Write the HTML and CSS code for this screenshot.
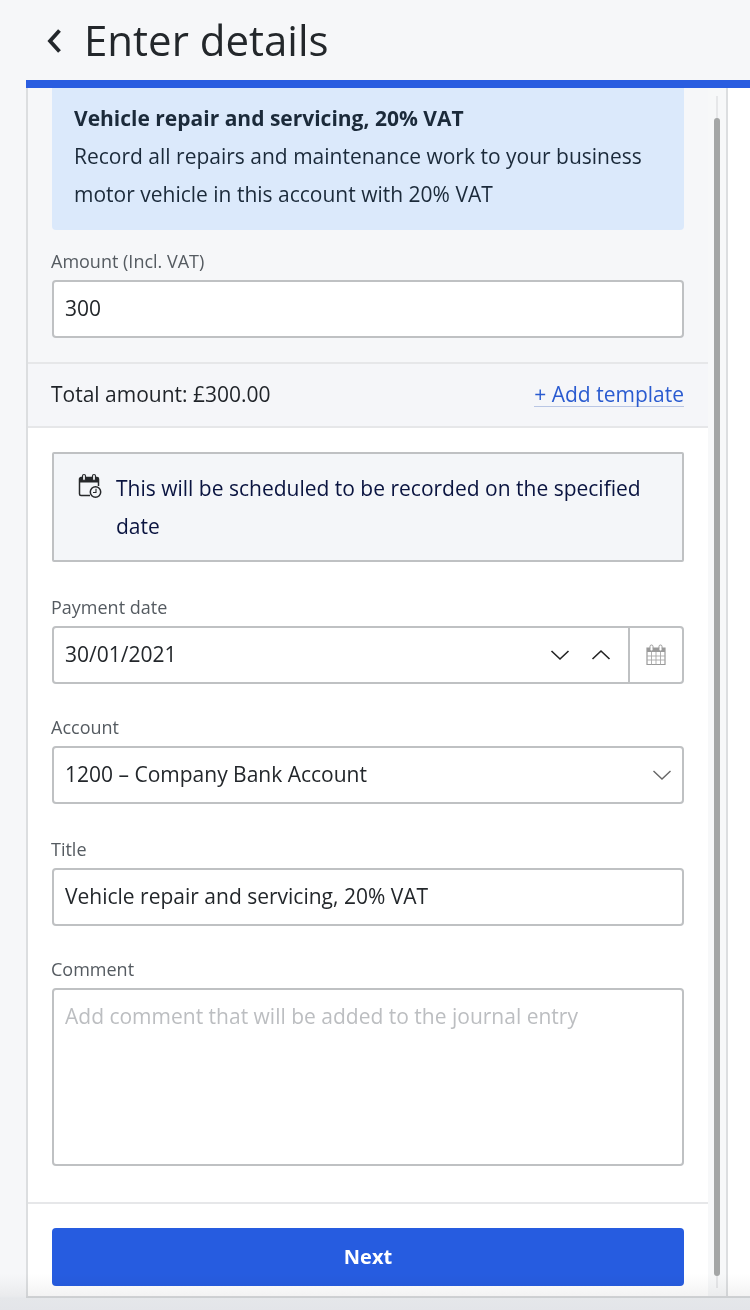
FILE: index.html
```html
<!DOCTYPE html>
<html lang="en">

<head>
  <meta charset="UTF-8">
  <meta name="viewport" content="width=device-width, initial-scale=1.0">
  <title>Enter details</title>
  <link rel="stylesheet" href="styles.css">
</head>

<body>
  <div class="header">
    <svg class="back-icon" width="16" height="26" viewBox="0 0 16 26">
      <path d="M13.5 2.5 L4 13 L13.5 23.5" fill="none" stroke="#23272b" stroke-width="3.8" />
    </svg>
    <h1>Enter details</h1>
  </div>

  <div class="panel">
    <div class="panel-main">

      <div class="top-section">
        <div class="info-box">
          <strong>Vehicle repair and servicing, 20% VAT</strong>
          <p>Record all repairs and maintenance work to your business motor vehicle in this account with 20% VAT</p>
        </div>
        <label class="field-label amount-label">Amount (Incl. VAT)</label>
        <div class="input">300</div>
      </div>

      <div class="total-row">
        <span>Total amount: £300.00</span>
        <a href="#" class="add-template">+ Add template</a>
      </div>

      <div class="form">
        <div class="notice">
          <svg class="notice-icon" width="24" height="26" viewBox="0 0 24 26">
            <path d="M3 4.5 H19 A1.5 1.5 0 0 1 20.5 6 V13 M12 22.5 H3 A1.5 1.5 0 0 1 1.5 21 V6 A1.5 1.5 0 0 1 3 4.5" fill="none" stroke="#26282b" stroke-width="1.5" />
            <path d="M1.5 5 H20.5 V9.5 H1.5 Z" fill="#26282b" />
            <rect x="4.5" y="1.5" width="3" height="6" rx="1.5" fill="#f4f6f9" stroke="#26282b" stroke-width="1.2" />
            <rect x="14.5" y="1.5" width="3" height="6" rx="1.5" fill="#f4f6f9" stroke="#26282b" stroke-width="1.2" />
            <circle cx="17.5" cy="19" r="5.2" fill="#f4f6f9" stroke="#26282b" stroke-width="1.5" />
            <path d="M18 15.8 V19.5 H15" fill="none" stroke="#26282b" stroke-width="1.1" />
          </svg>
          <p>This will be scheduled to be recorded on the specified date</p>
        </div>

        <label class="field-label field-label-wide">Payment date</label>
        <div class="input date-input">
          <span class="date-value">30/01/2021</span>
          <svg class="chevron" width="20" height="12" viewBox="0 0 20 12">
            <path d="M1.5 2 L10 10 L18.5 2" fill="none" stroke="#222" stroke-width="1.6" />
          </svg>
          <svg class="chevron" width="20" height="12" viewBox="0 0 20 12">
            <path d="M1.5 10 L10 2 L18.5 10" fill="none" stroke="#222" stroke-width="1.6" />
          </svg>
          <span class="date-button">
            <svg width="20" height="22" viewBox="0 0 20 22">
              <path d="M1 4 H19 V20.5 H1 Z" fill="#fff" stroke="#9a9a9a" stroke-width="1.2" />
              <path d="M1 4 H19 V8 H1 Z" fill="#9a9a9a" />
              <path d="M1 12 H19 M1 16 H19 M5.5 8 V20.5 M10 8 V20.5 M14.5 8 V20.5" fill="none" stroke="#a8a8a8" stroke-width="0.9" />
              <rect x="4" y="1" width="3" height="6" rx="1.5" fill="#fff" stroke="#9a9a9a" stroke-width="1" />
              <rect x="13" y="1" width="3" height="6" rx="1.5" fill="#fff" stroke="#9a9a9a" stroke-width="1" />
            </svg>
          </span>
        </div>

        <label class="field-label">Account</label>
        <div class="input select-input">
          <span class="select-value">1200 – Company Bank Account</span>
          <svg width="20" height="12" viewBox="0 0 20 12">
            <path d="M1.5 2 L10 10 L18.5 2" fill="none" stroke="#666" stroke-width="1.4" />
          </svg>
        </div>

        <label class="field-label field-label-wide">Title</label>
        <div class="input">Vehicle repair and servicing, 20% VAT</div>

        <label class="field-label">Comment</label>
        <div class="textarea">Add comment that will be added to the journal entry</div>
      </div>

      <div class="footer">
        <button class="next-button">Next</button>
      </div>
    </div>

    <div class="scroll-column">
      <div class="scroll-track">
        <div class="scroll-thumb"></div>
      </div>
    </div>
  </div>

  <div class="bottom-fade"></div>
</body>

</html>
```

FILE: styles.css
```css
* {
  margin: 0;
  padding: 0;
  box-sizing: border-box;
}

html,
body {
  height: 1310px;
  overflow: hidden;
}

body {
  font-family: "Open Sans", "Noto Sans", sans-serif;
  font-size: 21px;
  color: #1f2328;
  background: #f6f7f9;
  position: relative;
}

.header {
  height: 80px;
  display: flex;
  align-items: center;
  padding-left: 46px;
  gap: 22px;
}

.back-icon {
  margin-top: 2px;
}

.header h1 {
  font-size: 42px;
  font-weight: 400;
  color: #23272b;
  padding-bottom: 2px;
}

.panel {
  margin-left: 26px;
  height: 1218px;
  display: flex;
  border-top: 8px solid #2a5de0;
  border-bottom: 2px solid #dadcde;
  background: linear-gradient(to right, #dcdee0 2px, #fff 2px);
  padding-left: 2px;
}

.panel-main {
  width: 680px;
  background: #fff;
  display: flex;
  flex-direction: column;
}

.top-section {
  background: #f6f7f9;
  padding: 0 24px 24px;
  border-bottom: 2px solid #e6e7e9;
}

.info-box {
  background: #dbe9fb;
  border-radius: 0 0 4px 4px;
  padding: 11px 22px 17px;
  line-height: 38px;
  color: #1b2a3a;
  margin-bottom: 21px;
}

.info-box strong {
  display: block;
  font-weight: 700;
}

.field-label {
  display: block;
  font-size: 18px;
  line-height: 20px;
  color: #555b61;
  margin-top: 33px;
  margin-bottom: 9px;
  margin-left: -1px;
}

.field-label-wide {
  margin-top: 35px;
}

.amount-label {
  margin-top: 0;
}

.input {
  height: 58px;
  background: #fff;
  border: 2px solid #bfc1c3;
  border-radius: 4px;
  padding: 0 11px;
  line-height: 52px;
  color: #23272b;
}

.total-row {
  height: 64px;
  background: #f5f6f9;
  border-bottom: 2px solid #e6e7e9;
  padding: 0 24px 2px 23px;
  display: flex;
  align-items: center;
  justify-content: space-between;
}

.add-template {
  color: #2a5bd0;
  text-decoration: none;
  border-bottom: 1px solid #b9c6e4;
  line-height: 24px;
}

.form {
  padding: 24px 24px 0;
  flex: 1;
}

.notice {
  height: 110px;
  background: #f4f6f9;
  border: 2px solid #bfc1c3;
  border-radius: 2px;
  padding: 15px 24px;
  display: flex;
  gap: 14px;
  line-height: 38px;
  color: #0a1440;
}

.notice-icon {
  flex: none;
  margin-top: 4px;
}

.date-input {
  display: flex;
  align-items: center;
  padding-right: 0;
}

.date-value {
  flex: 1;
  margin-top: -2px;
}

.date-input .chevron {
  margin-right: 21px;
}

.date-input .chevron + .chevron {
  margin-right: 17px;
}

.date-button {
  width: 54px;
  height: 54px;
  border-left: 2px solid #bfc1c3;
  display: flex;
  align-items: center;
  justify-content: center;
}

.select-input {
  display: flex;
  align-items: center;
  justify-content: space-between;
  padding-right: 10px;
}

.select-value {
  margin-top: -2px;
}

.textarea {
  height: 178px;
  background: #fff;
  border: 2px solid #bfc1c3;
  border-radius: 4px;
  padding: 0 11px;
  line-height: 52px;
  color: #bcbec1;
}

.footer {
  height: 94px;
  padding: 24px 24px 0;
  border-top: 2px solid #e6e7e9;
}

.next-button {
  width: 100%;
  height: 58px;
  background: #265ce0;
  color: #fff;
  border: none;
  border-radius: 4px;
  font-family: inherit;
  font-size: 20px;
  font-weight: 700;
  padding-bottom: 2px;
}

.scroll-column {
  width: 18px;
  background: #f7f8f9;
  padding: 8px 6px 0;
  position: relative;
}

.scroll-column::after {
  content: '';
  position: absolute;
  top: 0;
  bottom: 0;
  right: -2px;
  width: 2px;
  background: #dcdee0;
}

.scroll-track {
  width: 6px;
  height: 1192px;
  padding-top: 22px;
  background: linear-gradient(to right, transparent 2px, #e6e7e9 2px, #e6e7e9 4px, transparent 4px);
}

.scroll-thumb {
  width: 6px;
  height: 1158px;
  background: #a4a6a6;
  border-radius: 3px;
}

.bottom-fade {
  position: absolute;
  left: 0;
  right: 0;
  bottom: 0;
  height: 36px;
  background: linear-gradient(to bottom, #fff, #f3f3f3 22px, #eeeff0 24px, #ecedef);
  mix-blend-mode: multiply;
  pointer-events: none;
}
```
